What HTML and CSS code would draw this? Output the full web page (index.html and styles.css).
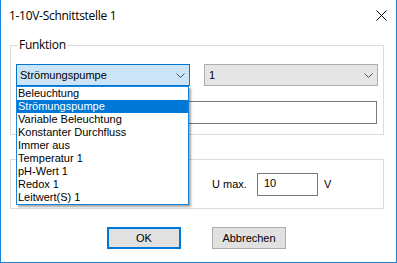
FILE: index.html
```html
<!DOCTYPE html>
<html lang="de">
<head>
<meta charset="utf-8">
<title>1-10V-Schnittstelle 1</title>
<link rel="stylesheet" href="styles.css">
</head>
<body>
<div class="window">
  <div class="titlebar">
    <span class="title">1-10V-Schnittstelle 1</span>
    <svg class="close" width="11" height="11" viewBox="0 0 11 11"><path d="M0.5 0.5 L10.5 10.5 M10.5 0.5 L0.5 10.5" stroke="#000" stroke-width="1" fill="none"/></svg>
  </div>
  <div class="content">
    <fieldset class="group group-func">
      <legend class="legend">Funktion</legend>
      <div class="row">
        <div class="combo-wrap">
          <div class="combo combo-focus">
            <span class="combo-text">Strömungspumpe</span>
            <svg class="chev" width="9" height="5" viewBox="0 0 9 5"><path d="M0.5 0.5 L4.5 4.5 L8.5 0.5" stroke="#555" stroke-width="1" fill="none"/></svg>
          </div>
          <ul class="dropdown">
            <li>Beleuchtung</li>
            <li class="sel">Strömungspumpe</li>
            <li>Variable Beleuchtung</li>
            <li>Konstanter Durchfluss</li>
            <li>Immer aus</li>
            <li>Temperatur 1</li>
            <li>pH-Wert 1</li>
            <li>Redox 1</li>
            <li>Leitwert(S) 1</li>
          </ul>
        </div>
        <div class="combo combo-plain">
          <span class="combo-text">1</span>
          <svg class="chev" width="9" height="5" viewBox="0 0 9 5"><path d="M0.5 0.5 L4.5 4.5 L8.5 0.5" stroke="#555" stroke-width="1" fill="none"/></svg>
        </div>
      </div>
      <div class="textfield"></div>
    </fieldset>
    <div class="group group-volt">
      <span class="label">U max.</span>
      <div class="input">10</div>
      <span class="unit">V</span>
    </div>
    <div class="buttons">
      <div class="btn btn-default">OK</div>
      <div class="btn">Abbrechen</div>
    </div>
  </div>
</div>
</body>
</html>
```

FILE: styles.css
```css
html, body {
  margin: 0;
  padding: 0;
  background: #ffffff;
}

.window {
  width: 397px;
  height: 263px;
  box-sizing: border-box;
  border: 1px solid #1883d7;
  border-top: none;
  display: flex;
  flex-direction: column;
  font-family: "Liberation Sans", Arial, sans-serif;
  font-size: 11px;
  color: #000;
  background: #fff;
}

.titlebar {
  height: 30px;
  flex: none;
  display: flex;
  align-items: center;
  padding-left: 8px;
  padding-right: 9px;
}

.title {
  flex: 1;
  font-family: "Open Sans", "Noto Sans", sans-serif;
  font-size: 12px;
  letter-spacing: -0.3px;
  color: #000;
}

.close {
  display: block;
}

.content {
  padding-left: 9px;
  display: flex;
  flex-direction: column;
}

.group {
  width: 374px;
  box-sizing: border-box;
  border: 1px solid #dcdcdc;
  margin: 0;
}

.group-func {
  margin-top: 8px;
  padding: 12px 5px 10px 5px;
  min-width: 0;
}

.legend {
  font-family: "Open Sans", "Noto Sans", sans-serif;
  font-size: 12px;
  letter-spacing: -0.3px;
  line-height: 14px;
  padding: 0 1px;
  margin-left: 2px;
}

.row {
  display: flex;
  gap: 14px;
}

.combo-wrap {
  position: relative;
}

.combo {
  width: 174px;
  height: 22px;
  box-sizing: border-box;
  display: flex;
  align-items: center;
  justify-content: space-between;
  padding: 0 4px 0 3px;
}

.combo-focus {
  border: 1px solid #0078d7;
  background: #cce4f7;
}

.combo-plain {
  border: 1px solid #adadad;
  background: #e5e5e5;
  padding-left: 4px;
}

.combo-text {
  line-height: 13px;
}

.chev {
  display: block;
}

.dropdown {
  position: absolute;
  left: 0;
  top: 100%;
  width: 173px;
  box-sizing: border-box;
  margin: 0;
  padding: 0;
  list-style: none;
  background: #fff;
  border: 1px solid #1883d7;
  box-shadow: 2px 2px 2px rgba(0, 0, 0, 0.35);
  z-index: 2;
}

.dropdown li {
  height: 13px;
  line-height: 13px;
  padding-left: 1px;
  white-space: nowrap;
}

.dropdown li.sel {
  background: #0078d7;
  color: #fff;
}

.textfield {
  margin-top: 15px;
  width: 361px;
  height: 23px;
  box-sizing: border-box;
  border: 1px solid #7a7a7a;
  background: #fff;
}

.group-volt {
  margin-top: 24px;
  height: 50px;
  display: flex;
  align-items: center;
  padding-left: 201px;
}

.label {
  width: 45px;
}

.input {
  width: 61px;
  height: 23px;
  box-sizing: border-box;
  border: 1px solid #7a7a7a;
  padding: 3px 0 0 6px;
  line-height: 13px;
}

.unit {
  margin-left: 6px;
}

.buttons {
  margin-top: 18px;
  display: flex;
  gap: 31px;
  padding-left: 97px;
}

.btn {
  width: 74px;
  height: 22px;
  box-sizing: border-box;
  border: 1px solid #adadad;
  background: #e1e1e1;
  display: flex;
  align-items: center;
  justify-content: center;
}

.btn-default {
  border: 2px solid #0078d7;
}
```
